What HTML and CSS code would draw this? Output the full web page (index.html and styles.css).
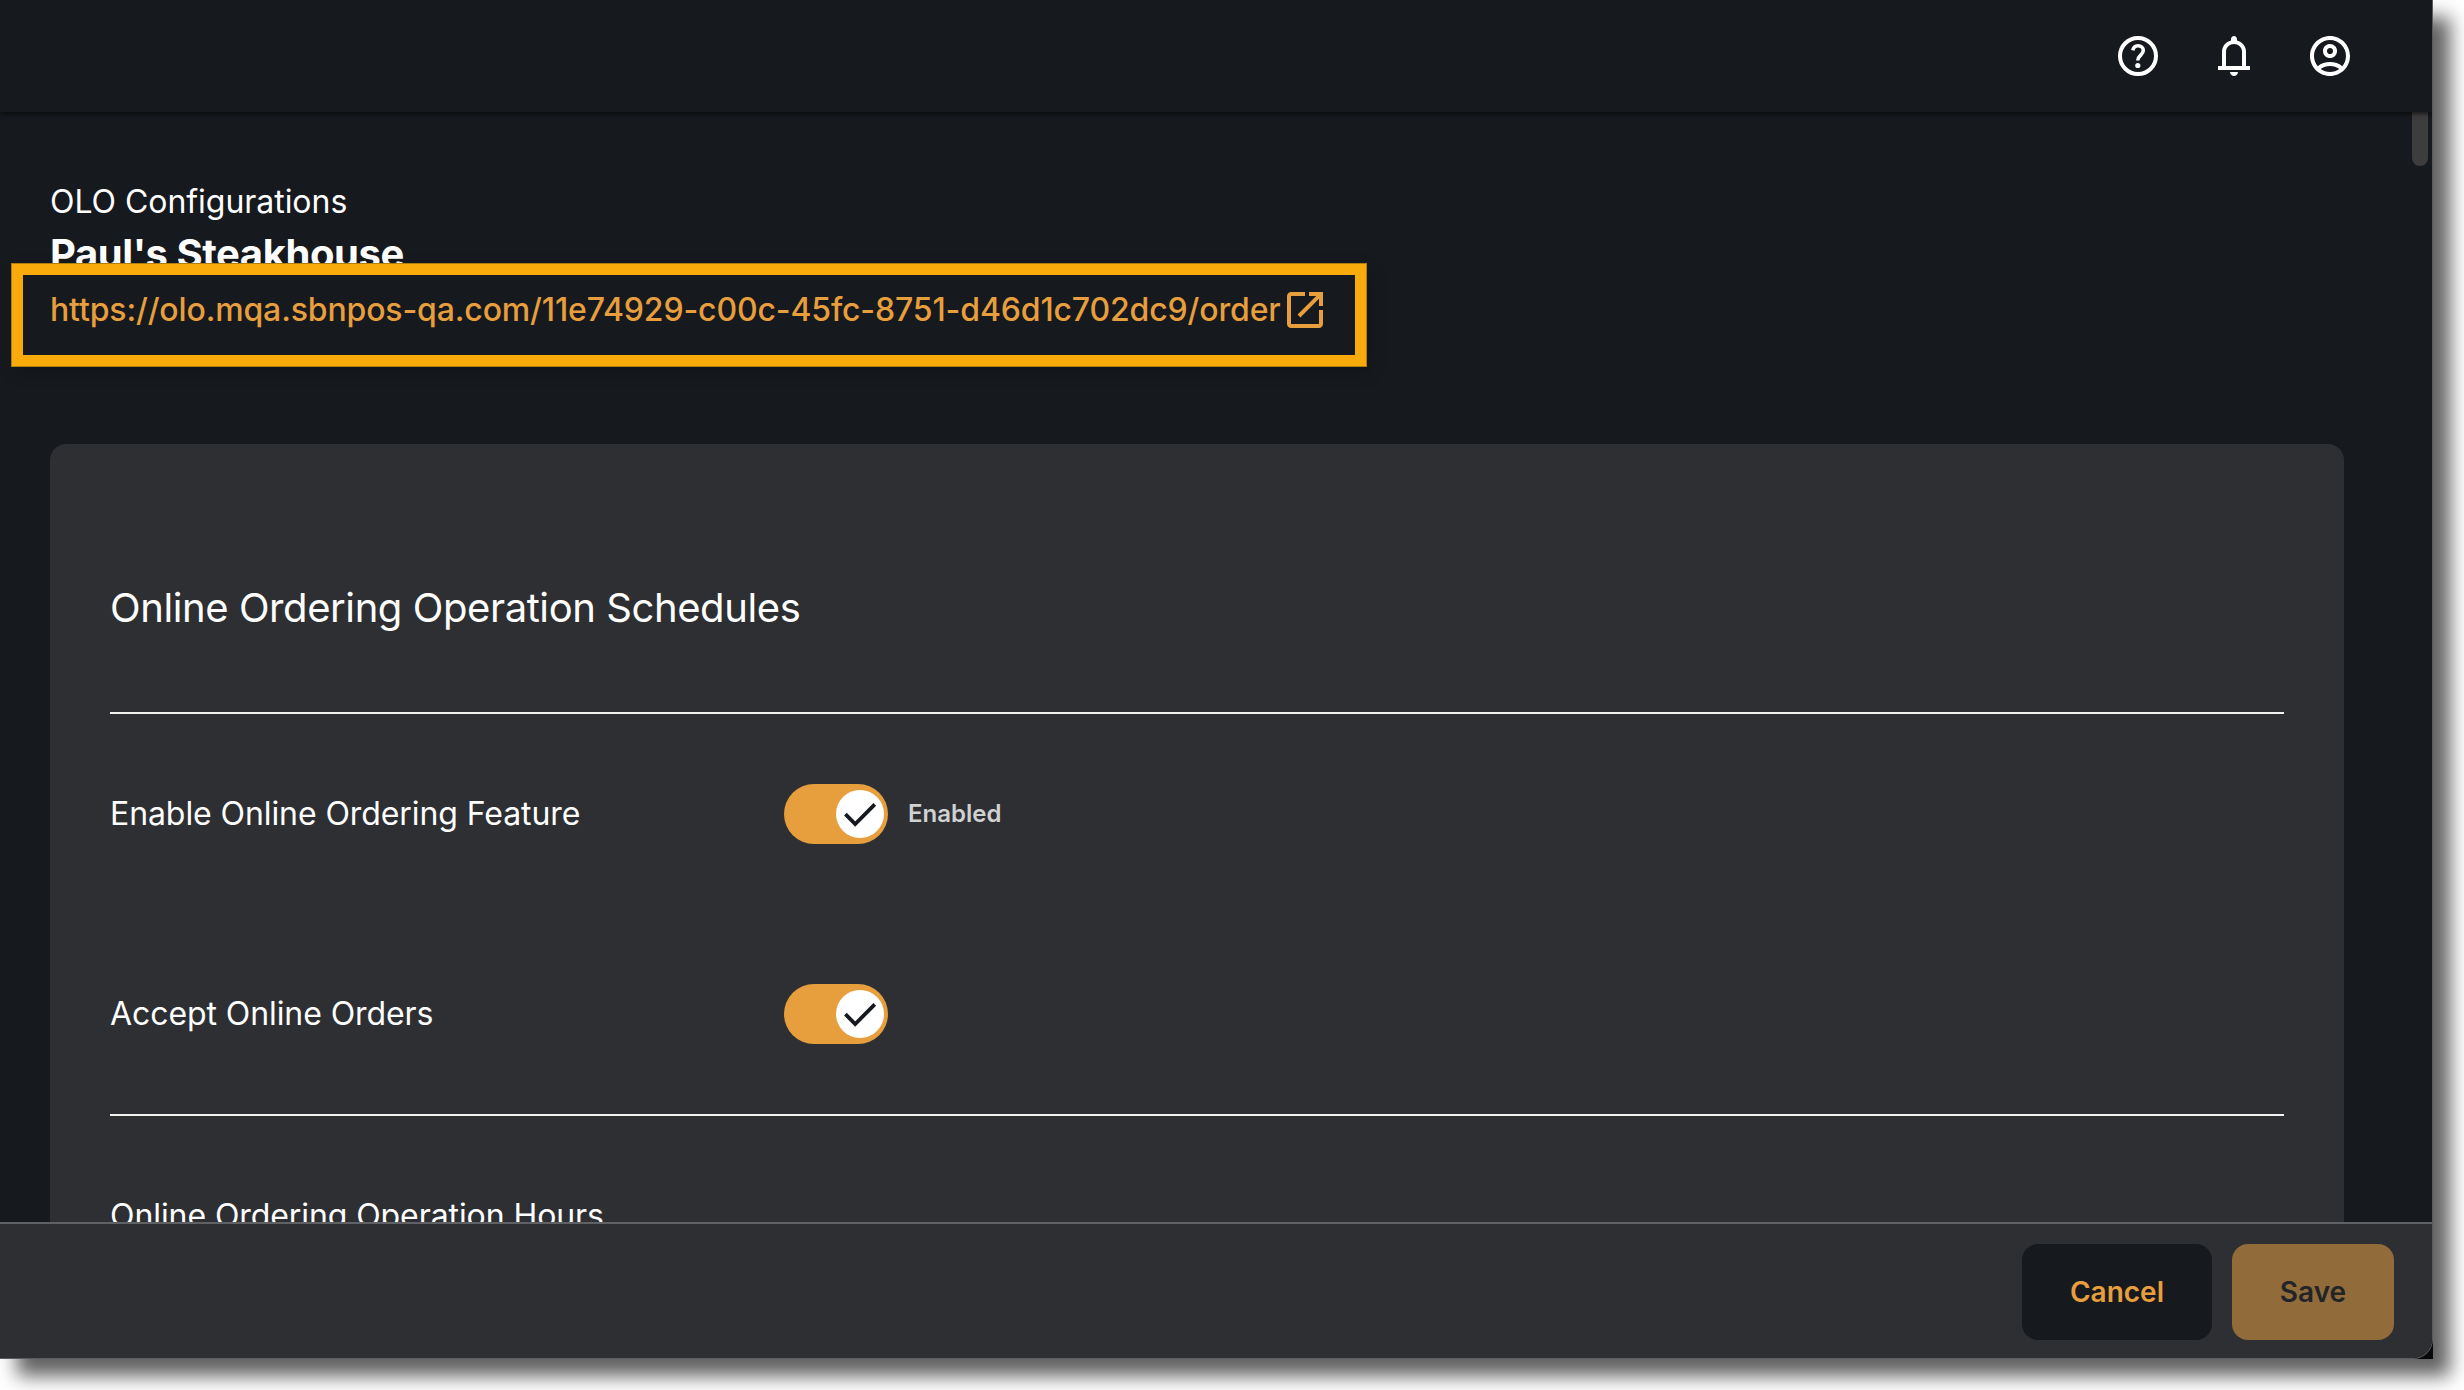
FILE: index.html
```html
<!DOCTYPE html>
<html lang="en">
<head>
    <meta charset="UTF-8">
    <meta name="viewport" content="width=device-width, initial-scale=1.0">
    <title>OLO Configurations</title>
    <link rel="stylesheet" href="styles.css">
</head>
<body>
    <div class="window">
        <div class="screen">
            <header class="topbar">
                <svg class="icon" viewBox="0 0 24 24"><circle class="help-ring" cx="12" cy="12" r="9"/><path class="help-mark" d="M9.4 9.2C9.7 7.7 10.7 6.9 12 6.9c1.5 0 2.65 1 2.65 2.4 0 2.1-2.75 2.5-2.75 4.9"/><circle cx="11.9" cy="16.75" r="1.3"/></svg>
                <svg class="icon" viewBox="0 0 24 24"><path d="M4 19v-2h2v-7c0-1.38.42-2.61 1.25-3.69S9.17 4.53 10.5 4.2v-.7c0-.42.15-.77.44-1.06S11.58 2 12 2s.77.15 1.06.44.44.64.44 1.06v.7c1.33.33 2.42 1.04 3.25 2.11S18 8.62 18 10v7h2v2H4zm8 3c-.55 0-1.02-.2-1.41-.59S10 20.55 10 20h4c0 .55-.2 1.02-.59 1.41S12.55 22 12 22zm-4-5h8v-7c0-1.1-.39-2.04-1.17-2.83S13.1 6 12 6s-2.04.39-2.83 1.17S8 8.9 8 10v7z"/></svg>
                <svg class="icon" viewBox="0 0 24 24"><path d="M5.85 17.1c.85-.65 1.8-1.16 2.85-1.54S10.85 15 12 15s2.25.19 3.3.56 2 .89 2.85 1.54c.58-.68 1.04-1.46 1.36-2.33S20 12.98 20 12c0-2.22-.78-4.1-2.34-5.66S14.22 4 12 4s-4.1.78-5.66 2.34S4 9.78 4 12c0 .98.16 1.9.49 2.77s.78 1.65 1.36 2.33zM12 13c-.98 0-1.81-.34-2.49-1.01S8.5 10.48 8.5 9.5s.34-1.81 1.01-2.49S11.02 6 12 6s1.81.34 2.49 1.01S15.5 8.52 15.5 9.5s-.34 1.81-1.01 2.49S12.98 13 12 13zm0 9C6.48 22 2 17.52 2 12S6.48 2 12 2s10 4.48 10 10-4.48 10-10 10zm0-2c.88 0 1.72-.13 2.5-.39s1.5-.63 2.15-1.11c-.65-.48-1.37-.85-2.15-1.11S12.88 17 12 17s-1.72.13-2.5.39-1.5.63-2.15 1.11c.65.48 1.37.85 2.15 1.11s1.62.39 2.5.39zm0-9c.43 0 .79-.14 1.08-.43s.42-.64.42-1.07-.14-.79-.42-1.08S12.43 8 12 8s-.79.14-1.08.42-.42.65-.42 1.08.14.79.42 1.07.65.43 1.08.43z"/></svg>
            </header>

            <main class="content">
                <div class="scrollbar"></div>
                <div class="title">OLO Configurations</div>
                <h1 class="store">Paul's Steakhouse</h1>
                <div class="link-row">
                    <a class="store-link" href="#">https://olo.mqa.sbnpos-qa.com/11e74929-c00c-45fc-8751-d46d1c702dc9/order</a>
                    <svg class="icon" viewBox="0 0 24 24"><path d="M5 21c-.55 0-1.02-.2-1.41-.59S3 19.55 3 19V5c0-.55.2-1.02.59-1.41S4.45 3 5 3h7v2H5v14h14v-7h2v7c0 .55-.2 1.02-.59 1.41S19.55 21 19 21H5zm4.7-5.3-1.4-1.4L17.6 5H14V3h7v7h-2V6.4l-9.3 9.3z"/></svg>
                    <div class="highlight"></div>
                </div>

                <section class="card">
                    <h2 class="card-title">Online Ordering Operation Schedules</h2>
                    <div class="row">
                        <span class="label">Enable Online Ordering Feature</span>
                        <span class="toggle"><span class="knob"><svg class="check" viewBox="0 0 24 24"><path d="M4.7 12.1 9.6 17 19.4 7.2"/></svg></span></span>
                        <span class="state">Enabled</span>
                    </div>
                    <div class="row">
                        <span class="label">Accept Online Orders</span>
                        <span class="toggle"><span class="knob"><svg class="check" viewBox="0 0 24 24"><path d="M4.7 12.1 9.6 17 19.4 7.2"/></svg></span></span>
                    </div>
                    <div class="hours">
                        <span class="label">Online Ordering Operation Hours</span>
                    </div>
                </section>
            </main>

            <footer class="actions">
                <button class="btn btn-cancel">Cancel</button>
                <button class="btn btn-save">Save</button>
            </footer>
        </div>
    </div>
</body>
</html>
```

FILE: styles.css
```css
:root {
    --bg: #16191d;
    --panel: #2e2f33;
    --accent: #e79e3d;
    --text: #ffffff;
}
* {
    box-sizing: border-box;
}
body {
    height: 1390px;
    margin: 0;
    background: #ffffff;
    color: var(--text);
    font-family: Inter, sans-serif;
    overflow: hidden;
}
.window {
    width: 2433px;
    height: 1359px;
    background: #08090b;
    box-shadow: 17px 17px 18px rgba(0, 0, 0, 0.62);
}
.screen {
    display: flex;
    flex-direction: column;
    height: 100%;
    background: var(--bg);
    border-right: 1px solid #5a5b5e;
    border-bottom: 1px solid #5a5b5e;
    border-bottom-right-radius: 20px;
    overflow: hidden;
}

/* Top bar */
.topbar {
    position: relative;
    z-index: 1;
    display: flex;
    flex: none;
    align-items: center;
    justify-content: flex-end;
    gap: 48px;
    height: 112px;
    padding-right: 78px;
    background: var(--bg);
    box-shadow: 0 2px 4px rgba(0, 0, 0, 0.6);
}
.icon {
    flex: none;
    width: 48px;
    height: 48px;
    fill: currentColor;
}
.help-ring {
    fill: none;
    stroke: currentColor;
    stroke-width: 2;
}
.help-mark {
    fill: none;
    stroke: currentColor;
    stroke-width: 1.8;
}

/* Page content */
.content {
    position: relative;
    flex: 1;
    min-height: 0;
    padding: 70px 88px 0 50px;
    overflow: hidden;
}
.scrollbar {
    position: absolute;
    top: 0;
    right: 4px;
    width: 16px;
    height: 54px;
    border-radius: 0 0 8px 8px;
    background: #3d3d3d;
}
.title {
    font-size: 32px;
    line-height: 40px;
    letter-spacing: -0.04px;
}
.store {
    margin: 8px 0 0;
    font-size: 40px;
    line-height: 48px;
    font-weight: 700;
    letter-spacing: -0.43px;
}
.link-row {
    position: relative;
    display: flex;
    align-items: center;
    height: 48px;
    margin-top: 8px;
    color: var(--accent);
}
.store-link {
    width: 1231px;
    color: inherit;
    font-size: 32px;
    line-height: 48px;
    font-weight: 500;
    letter-spacing: -0.145px;
    text-decoration: none;
    white-space: nowrap;
}
.highlight {
    position: absolute;
    top: -23px;
    left: -39px;
    width: 1356px;
    height: 104px;
    border: 12px solid #f9ab0b;
    outline: 1px solid #b0800f;
    outline-offset: -1px;
    box-shadow: 4px 6px 16px rgba(0, 0, 0, 0.15);
}
.card {
    height: 900px;
    margin-top: 110px;
    padding: 134px 60px 0;
    border-radius: 16px;
    background: var(--panel);
}
.card-title {
    height: 136px;
    margin: 0;
    border-bottom: 2px solid #f2f2f0;
    font-size: 40px;
    line-height: 60px;
    font-weight: 400;
    letter-spacing: -0.41px;
}
.row {
    display: flex;
    align-items: center;
    height: 200px;
}
.label {
    width: 674px;
    font-size: 32px;
    line-height: 40px;
    letter-spacing: -0.08px;
}
.toggle {
    display: flex;
    align-items: center;
    justify-content: flex-end;
    width: 104px;
    height: 60px;
    padding-right: 4px;
    border-radius: 30px;
    background: var(--accent);
}
.knob {
    width: 48px;
    height: 48px;
    border-radius: 50%;
    background: #ffffff;
}
.check {
    display: block;
    width: 48px;
    height: 48px;
    fill: none;
    stroke: var(--bg);
    stroke-width: 1.9;
}
.state {
    margin: -1px 0 0 20px;
    color: #d0d1d1;
    font-size: 24px;
    font-weight: 600;
}
.hours {
    padding-top: 80px;
    border-top: 2px solid #f2f2f0;
}

/* Bottom actions */
.actions {
    position: relative;
    display: flex;
    flex: none;
    align-items: flex-start;
    justify-content: flex-end;
    gap: 20px;
    height: 136px;
    padding: 20px 38px 0 0;
    border-top: 2px solid #606164;
    background: var(--panel);
}
.btn {
    height: 96px;
    border: 0;
    border-radius: 16px;
    font-family: inherit;
    font-size: 28px;
    font-weight: 600;
}
.btn-cancel {
    width: 190px;
    background: var(--bg);
    color: var(--accent);
}
.btn-save {
    width: 162px;
    background: #916b39;
    color: #222427;
}
```
